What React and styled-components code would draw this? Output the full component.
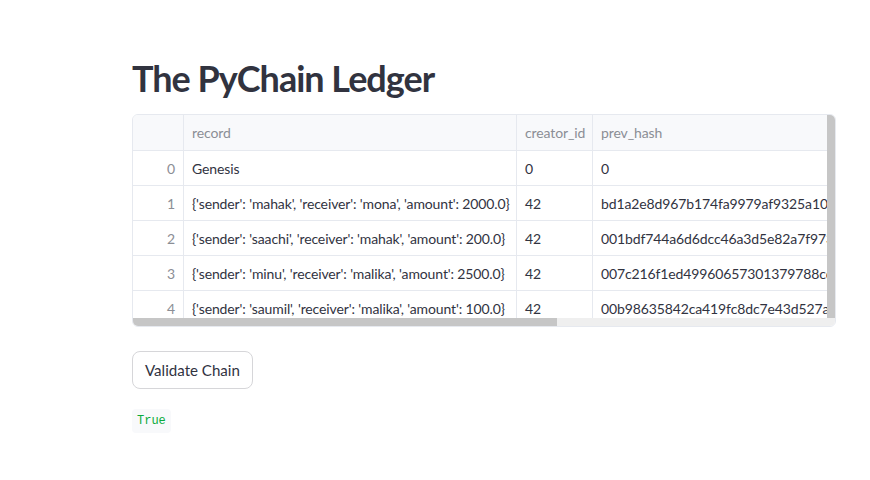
import React from "react";
import styled, { createGlobalStyle } from "styled-components";

const GlobalStyle = createGlobalStyle`
  body {
    margin: 0;
    background: #ffffff;
    font-family: "Lato", sans-serif;
    color: #31333f;
  }
`;

const rows = [
  { record: "Genesis", creator: "0", hash: "0" },
  {
    record: "{'sender': 'mahak', 'receiver': 'mona', 'amount': 2000.0}",
    creator: "42",
    hash: "bd1a2e8d967b174fa9979af9325a10140a6b2e1f",
  },
  {
    record: "{'sender': 'saachi', 'receiver': 'mahak', 'amount': 200.0}",
    creator: "42",
    hash: "001bdf744a6d6dcc46a3d5e82a7f97394a1c0e7d",
  },
  {
    record: "{'sender': 'minu', 'receiver': 'malika', 'amount': 2500.0}",
    creator: "42",
    hash: "007c216f1ed49960657301379788cd2da3f14e0",
  },
  {
    record: "{'sender': 'saumil', 'receiver': 'malika', 'amount': 100.0}",
    creator: "42",
    hash: "00b98635842ca419fc8dc7e43d527a6d94b0c3a1",
  },
];

function App() {
  return (
    <Page>
      <GlobalStyle />
      <Main>
        <Title>The PyChain Ledger</Title>
        <Frame>
          <Viewport>
            <Grid>
              <HeadCell />
              <HeadCell>record</HeadCell>
              <HeadCell>creator_id</HeadCell>
              <HeadCell>prev_hash</HeadCell>
              {rows.map((r, i) => (
                <React.Fragment key={i}>
                  <IndexCell>{i}</IndexCell>
                  <Cell>{r.record}</Cell>
                  <Cell>{r.creator}</Cell>
                  <Cell>{r.hash}</Cell>
                </React.Fragment>
              ))}
            </Grid>
          </Viewport>
          <VBar />
          <HBar>
            <Thumb />
          </HBar>
          <Corner />
        </Frame>
        <Button>Validate Chain</Button>
        <Code>True</Code>
      </Main>
    </Page>
  );
}

export default App;

const Page = styled.div`
  width: 870px;
  height: 480px;
  overflow: hidden;
`;

const Main = styled.div`
  display: flex;
  flex-direction: column;
  align-items: flex-start;
  padding: 54px 0 0 132px;
`;

const Title = styled.h1`
  margin: 0 0 12px;
  font-family: "Lato", sans-serif;
  font-size: 36px;
  font-weight: 700;
  line-height: 48px;
  letter-spacing: -1px;
  color: #31333f;
`;

const Frame = styled.div`
  width: 704px;
  display: grid;
  grid-template-columns: 1fr 8px;
  grid-template-rows: 203px 8px;
  border: 1px solid #e6e9ef;
  border-radius: 6px;
  overflow: hidden;
  box-sizing: border-box;
`;

const Viewport = styled.div`
  overflow: hidden;
`;

const Grid = styled.div`
  display: grid;
  grid-template-columns: 51px 333px 76px 420px;
  grid-auto-rows: 35px;
  grid-template-rows: 36px;
  font-size: 14px;
  letter-spacing: -0.12px;
`;

const Cell = styled.div`
  display: flex;
  align-items: center;
  padding: 0 8px;
  border-right: 1px solid #e6e9ef;
  border-bottom: 1px solid #e6e9ef;
  white-space: nowrap;
  overflow: hidden;
  color: #31333f;
`;

const HeadCell = styled(Cell)`
  background: #f8f9fb;
  color: #8b8e95;
`;

const IndexCell = styled(Cell)`
  justify-content: flex-end;
  color: #8b8e95;
`;

const VBar = styled.div`
  background: #c6c6c6;
`;

const HBar = styled.div`
  background: #efefef;
  display: flex;
`;

const Thumb = styled.div`
  width: 424px;
  background: #c6c6c6;
`;

const Corner = styled.div`
  background: #efefef;
`;

const Button = styled.button`
  margin-top: 24px;
  height: 38px;
  padding: 0 12px;
  border: 1px solid #d6d6d9;
  border-radius: 8px;
  background: #ffffff;
  font-family: "Lato", sans-serif;
  font-size: 15.1px;
  color: #31333f;
`;

const Code = styled.code`
  margin-top: 20px;
  padding: 5px 5px;
  border-radius: 4px;
  background: #f8f9fb;
  color: #09ab3b;
  font-family: "Liberation Mono", monospace;
  font-size: 12px;
`;
